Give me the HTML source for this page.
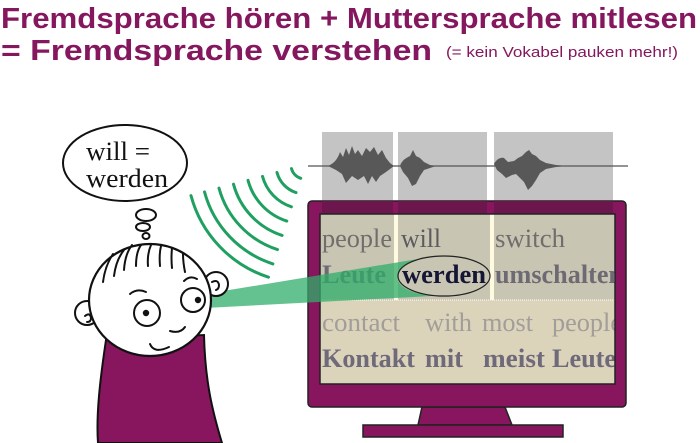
<!DOCTYPE html>
<html><head><meta charset="utf-8"><style>
html,body{margin:0;padding:0;background:#fff;}
svg{display:block}
</style></head><body>
<svg width="700" height="443" viewBox="0 0 700 443" xmlns="http://www.w3.org/2000/svg">
<defs><clipPath id="scr"><rect x="320" y="214" width="295" height="170"/></clipPath></defs>
<g fill="#85175f" font-family="Liberation Sans, sans-serif" font-weight="bold">
<text x="1" y="28" font-size="29" textLength="696" lengthAdjust="spacingAndGlyphs">Fremdsprache hören + Muttersprache mitlesen</text>
<text x="1" y="60" font-size="29" textLength="431" lengthAdjust="spacingAndGlyphs">= Fremdsprache verstehen</text>
<text x="446" y="57" font-size="15" font-weight="normal" textLength="232" lengthAdjust="spacingAndGlyphs">(= kein Vokabel pauken mehr!)</text>
</g>
<!-- audio -->
<rect x="322" y="132" width="71" height="69" fill="#c4c4c4"/>
<rect x="398" y="132" width="89" height="69" fill="#c4c4c4"/>
<rect x="494" y="132" width="119" height="69" fill="#c4c4c4"/>
<line x1="308" y1="166" x2="628" y2="166" stroke="#555" stroke-width="1.2"/>
<g fill="#585858">
<path d="M328,166 C335,163 338,158 340,152 L343,157 346,148 349,155 352,146 355,154 358,150 362,156 366,148 370,152 374,147 378,155 382,150 386,158 390,163 394,166 390,169 386,172 380,176 376,182 372,176 368,184 364,176 358,180 352,176 346,183 342,174 336,170 Z"/>
<path d="M400,166 C402,160 406,158 410,156 L413,150 416,156 420,158 424,162 430,165 436,166 430,168 424,170 420,176 416,184 412,186 408,178 403,172 Z"/>
<path d="M494,164 C496,160 500,157 504,158 L508,162 514,161 518,158 522,156 526,152 529,150 532,154 536,156 540,160 546,163 556,165 568,166 556,167 546,169 540,173 536,180 532,186 528,190 524,182 520,178 516,174 512,175 506,178 502,174 497,170 Z"/>
</g>
<!-- monitor -->
<path d="M422,407 L505,407 L512,425 L418,425 Z" fill="#87165e" stroke="#222" stroke-width="1.5"/>
<rect x="363" y="425" width="200" height="12" fill="#87165e" stroke="#222" stroke-width="1.5"/>
<rect x="308" y="201" width="318" height="206" rx="4" fill="#87165e" stroke="#222" stroke-width="1.5"/>
<rect x="322" y="201" width="71" height="13" fill="#6d164e"/>
<rect x="398" y="201" width="89" height="13" fill="#6d164e"/>
<rect x="494" y="201" width="119" height="13" fill="#6d164e"/>
<rect x="320" y="214" width="295" height="86" fill="#c8c5b3"/>
<rect x="320" y="300" width="295" height="84" fill="#dcd3bb"/>
<rect x="394" y="214" width="4" height="86" fill="#fffbe0"/>
<rect x="490" y="214" width="4" height="86" fill="#fffbe0"/>
<line x1="320" y1="300" x2="615" y2="300" stroke="#fff" stroke-width="1" stroke-dasharray="1,1"/>
<g font-family="Liberation Serif, serif" font-size="26" clip-path="url(#scr)" lengthAdjust="spacingAndGlyphs">
<text x="322" y="247" fill="#716d6d" textLength="70" lengthAdjust="spacingAndGlyphs">people</text>
<text x="401" y="247" fill="#5c5a5e" textLength="40" lengthAdjust="spacingAndGlyphs">will</text>
<text x="495" y="247" fill="#716d6d" textLength="70" lengthAdjust="spacingAndGlyphs">switch</text>
<text x="322" y="283" fill="#6e6a74" font-weight="bold" textLength="64" lengthAdjust="spacingAndGlyphs">Leute</text>
<text x="402" y="283" fill="#151535" font-weight="bold" textLength="84" lengthAdjust="spacingAndGlyphs">werden</text>
<text x="495" y="283" fill="#6e6a74" font-weight="bold" textLength="128" lengthAdjust="spacingAndGlyphs">umschalten</text>
<text x="322" y="331" fill="#a19d99" textLength="78" lengthAdjust="spacingAndGlyphs">contact</text>
<text x="425" y="331" fill="#a19d99" textLength="47" lengthAdjust="spacingAndGlyphs">with</text>
<text x="482" y="331" fill="#a19d99" textLength="51" lengthAdjust="spacingAndGlyphs">most</text>
<text x="552" y="331" fill="#a19d99" textLength="70" lengthAdjust="spacingAndGlyphs">people</text>
<text x="322" y="367" fill="#6e6a7a" font-weight="bold" textLength="93" lengthAdjust="spacingAndGlyphs">Kontakt</text>
<text x="425" y="367" fill="#6e6a7a" font-weight="bold" textLength="38" lengthAdjust="spacingAndGlyphs">mit</text>
<text x="483" y="367" fill="#6e6a7a" font-weight="bold" textLength="62" lengthAdjust="spacingAndGlyphs">meist</text>
<text x="552" y="367" fill="#6e6a7a" font-weight="bold" textLength="64" lengthAdjust="spacingAndGlyphs">Leute</text>
</g>
<rect x="320" y="214" width="295" height="170" fill="none" stroke="#222" stroke-width="1.5"/>
<!-- beam -->
<path d="M205,294 L418,259 C402,264 396,272 398,280 C400,288 414,294 432,296 L205,308 Z" fill="#2fae6a" fill-opacity="0.75"/>
<ellipse cx="444" cy="276" rx="46" ry="20" fill="none" stroke="#222" stroke-width="1.2"/>
<!-- waves -->
<g fill="none" stroke="#1fa060" stroke-width="3" stroke-linecap="round">
<path d="M291.5,168.6 A14,14 0 0 0 300.7,178.3"/>
<path d="M277,172.5 A29,29 0 0 0 296,192.6"/>
<path d="M262.5,176.4 A44,44 0 0 0 291.4,206.8"/>
<path d="M248,180.3 A59,59 0 0 0 286.8,221.1"/>
<path d="M233.5,184.2 A74,74 0 0 0 282.1,235.4"/>
<path d="M219,188.1 A89,89 0 0 0 277.5,249.6"/>
<path d="M204.5,191.9 A104,104 0 0 0 272.9,263.9"/>
<path d="M191,195.6 A118,118 0 0 0 268.5,277.2"/>
</g>
<!-- thought bubble -->
<ellipse cx="125" cy="163" rx="62" ry="38" fill="#fff" stroke="#111" stroke-width="2"/>
<g font-family="Liberation Serif, serif" font-size="26" fill="#111">
<text x="86" y="160" textLength="64" lengthAdjust="spacingAndGlyphs">will =</text>
<text x="86" y="187" textLength="82" lengthAdjust="spacingAndGlyphs">werden</text>
</g>
<ellipse cx="146" cy="215" rx="10" ry="6" fill="#fff" stroke="#111" stroke-width="2"/>
<ellipse cx="143" cy="227" rx="7" ry="4" fill="#fff" stroke="#111" stroke-width="2"/>
<ellipse cx="146" cy="236" rx="3.5" ry="3" fill="#fff" stroke="#111" stroke-width="2"/>
<!-- person -->
<path d="M106,340 C100,380 96,415 98,443 L222,443 C212,410 205,380 204,335 Z" fill="#87165e" stroke="#111" stroke-width="2"/>
<circle cx="87" cy="313" r="12" fill="#fff" stroke="#111" stroke-width="2"/>
<circle cx="216" cy="284" r="12" fill="#fff" stroke="#111" stroke-width="2"/>
<ellipse cx="150" cy="300" rx="61" ry="56" fill="#fff" stroke="#111" stroke-width="2.2"/>
<g fill="none" stroke="#111" stroke-width="2" stroke-linecap="round">
<path d="M85,316 q5,-4 6,2 q0,4 -4,4"/>
<path d="M212,282 q6,-3 7,3 q0,4 -3,5"/>
<path d="M103,282 q2,-16 10,-28"/><path d="M114,276 q2,-16 10,-26"/><path d="M124,270 q1,-16 8,-25"/>
<path d="M136,266 q0,-14 5,-21"/><path d="M148,266 q-1,-12 3,-21"/><path d="M160,266 q-1,-12 1,-20"/>
<path d="M172,268 q-1,-10 0,-20"/><path d="M185,272 q-2,-10 -2,-18"/>
<path d="M130,294 q7,-6 16,-2"/><path d="M184,281 q6,-6 13,-2"/>
<path d="M150,344 q4,10 19,3"/><path d="M170,331 q10,3 15,-4"/>
</g>
<circle cx="147" cy="313" r="13" fill="#fff" stroke="#111" stroke-width="2"/>
<circle cx="146" cy="313" r="3.2" fill="#111"/>
<circle cx="193" cy="300" r="12" fill="#fff" stroke="#111" stroke-width="2"/>
<circle cx="198" cy="300" r="3.2" fill="#111"/>
</svg>
</body></html>
